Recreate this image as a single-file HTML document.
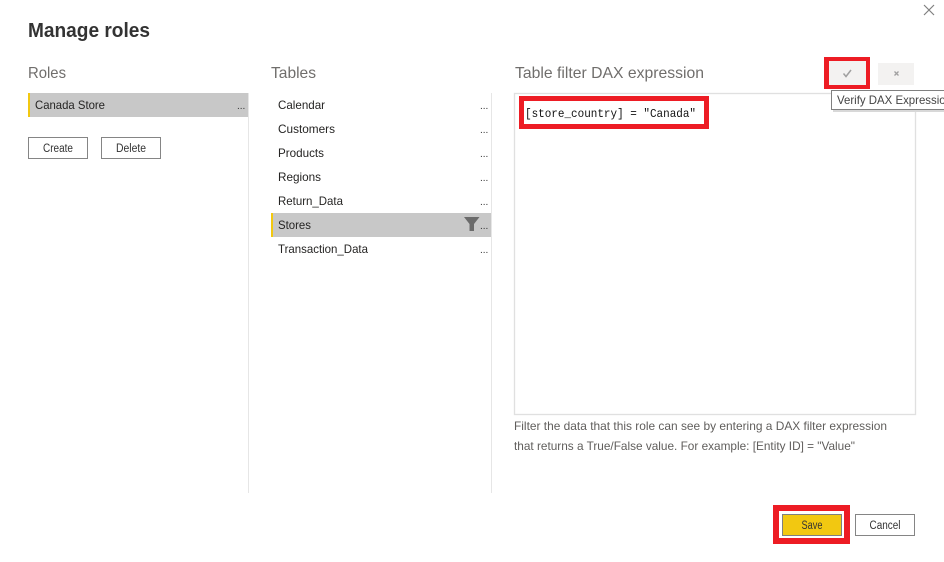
<!DOCTYPE html>
<html>
<head>
<meta charset="utf-8">
<style>
html,body{margin:0;padding:0;background:#fff;width:944px;height:562px;overflow:hidden}
svg{display:block;position:absolute;left:0;top:0}
text{font-family:"Liberation Sans",sans-serif;font-size:12px;fill:#252423}
.h{font-size:16px;fill:#706e6c}
.p{fill:#605e5c}
.b{text-anchor:middle;font-size:11.5px;fill:#333}
.d{font-size:10px;fill:#333}
</style>
</head>
<body>
<svg width="944" height="562" viewBox="0 0 944 562" xmlns="http://www.w3.org/2000/svg">
<rect width="944" height="562" fill="#fff"/>
<path d="M924 5L934 15M934 5L924 15" stroke="#808080" stroke-width="1.2" fill="none"/>

<text x="28" y="37" font-weight="bold" style="font-size:20px;fill:#333" textLength="122" lengthAdjust="spacingAndGlyphs">Manage roles</text>
<text class="h" x="28" y="78" textLength="38" lengthAdjust="spacingAndGlyphs">Roles</text>
<text class="h" x="271" y="78" textLength="45" lengthAdjust="spacingAndGlyphs">Tables</text>
<text class="h" x="515" y="78" textLength="189" lengthAdjust="spacingAndGlyphs">Table filter DAX expression</text>

<rect x="248" y="93" width="1" height="400" fill="#e6e6e6"/>
<rect x="491" y="93" width="1" height="400" fill="#e6e6e6"/>

<rect x="28" y="93" width="220" height="24" fill="#c8c8c8"/>
<rect x="28" y="93" width="2" height="24" fill="#f2c811"/>
<text x="35" y="109" textLength="70" lengthAdjust="spacingAndGlyphs">Canada Store</text>
<text class="d" x="237" y="109">...</text>

<rect x="28.5" y="137.5" width="59" height="21" fill="#fff" stroke="#858585"/>
<text class="b" x="58" y="152" textLength="30" lengthAdjust="spacingAndGlyphs">Create</text>
<rect x="101.5" y="137.5" width="59" height="21" fill="#fff" stroke="#858585"/>
<text class="b" x="131" y="152" textLength="30" lengthAdjust="spacingAndGlyphs">Delete</text>

<rect x="271" y="213" width="220" height="24" fill="#c8c8c8"/>
<rect x="271" y="213" width="2" height="24" fill="#f2c811"/>
<text x="278" y="109" textLength="47" lengthAdjust="spacingAndGlyphs">Calendar</text>
<text x="278" y="133" textLength="57" lengthAdjust="spacingAndGlyphs">Customers</text>
<text x="278" y="157" textLength="46" lengthAdjust="spacingAndGlyphs">Products</text>
<text x="278" y="181" textLength="43" lengthAdjust="spacingAndGlyphs">Regions</text>
<text x="278" y="205" textLength="65" lengthAdjust="spacingAndGlyphs">Return_Data</text>
<text x="278" y="229" textLength="33" lengthAdjust="spacingAndGlyphs">Stores</text>
<text x="278" y="253" textLength="90" lengthAdjust="spacingAndGlyphs">Transaction_Data</text>
<text class="d" x="480" y="109">...</text>
<text class="d" x="480" y="133">...</text>
<text class="d" x="480" y="157">...</text>
<text class="d" x="480" y="181">...</text>
<text class="d" x="480" y="205">...</text>
<text class="d" x="480" y="229">...</text>
<text class="d" x="480" y="253">...</text>
<path d="M464 217H479.5L474 224V231H469.5V224Z" fill="#6b6b6b"/>

<rect x="514.5" y="93.5" width="401" height="321" fill="#fff" stroke="#e0e0e0" stroke-width="1.3"/>
<rect x="521.5" y="98.5" width="185" height="28" fill="none" stroke="#ed1c24" stroke-width="5"/>
<text x="525" y="117" style="font-family:'Liberation Mono',monospace;font-size:12px;fill:#111" textLength="171" lengthAdjust="spacingAndGlyphs">[store_country] = "Canada"</text>

<rect x="824" y="57" width="46" height="32" fill="#ed1c24"/>
<rect x="829" y="61" width="37" height="24" fill="#f3f2f1"/>
<path d="M843.5 73.5L846 76.5L851 70" stroke="#a0a0a0" stroke-width="1.5" fill="none"/>
<rect x="878" y="63" width="36" height="22" fill="#f3f2f1"/>
<path d="M894.5 71.5L898.5 75.5M898.5 71.5L894.5 75.5" stroke="#a0a0a0" stroke-width="1.3" fill="none"/>

<rect x="833" y="92" width="115" height="20" fill="#d8d8d8"/>
<rect x="831.5" y="90.5" width="115" height="19" fill="#fff" stroke="#808080"/>
<text x="837" y="104" textLength="115" lengthAdjust="spacingAndGlyphs" style="font-size:12px;fill:#444">Verify DAX Expression</text>

<text class="p" x="514" y="430" textLength="373" lengthAdjust="spacingAndGlyphs">Filter the data that this role can see by entering a DAX filter expression</text>
<text class="p" x="514" y="450" textLength="341" lengthAdjust="spacingAndGlyphs">that returns a True/False value. For example: [Entity ID] = "Value"</text>

<rect x="776" y="508" width="71" height="33" fill="#fff" stroke="#ed1c24" stroke-width="6"/>
<rect x="782.5" y="514.5" width="59" height="21" fill="#f2c811" stroke="#7f7f7f"/>
<text class="b" x="812" y="529" textLength="21" lengthAdjust="spacingAndGlyphs">Save</text>
<rect x="855.5" y="514.5" width="59" height="21" fill="#fff" stroke="#858585"/>
<text class="b" x="885" y="529" textLength="31" lengthAdjust="spacingAndGlyphs">Cancel</text>
</svg>
</body>
</html>
